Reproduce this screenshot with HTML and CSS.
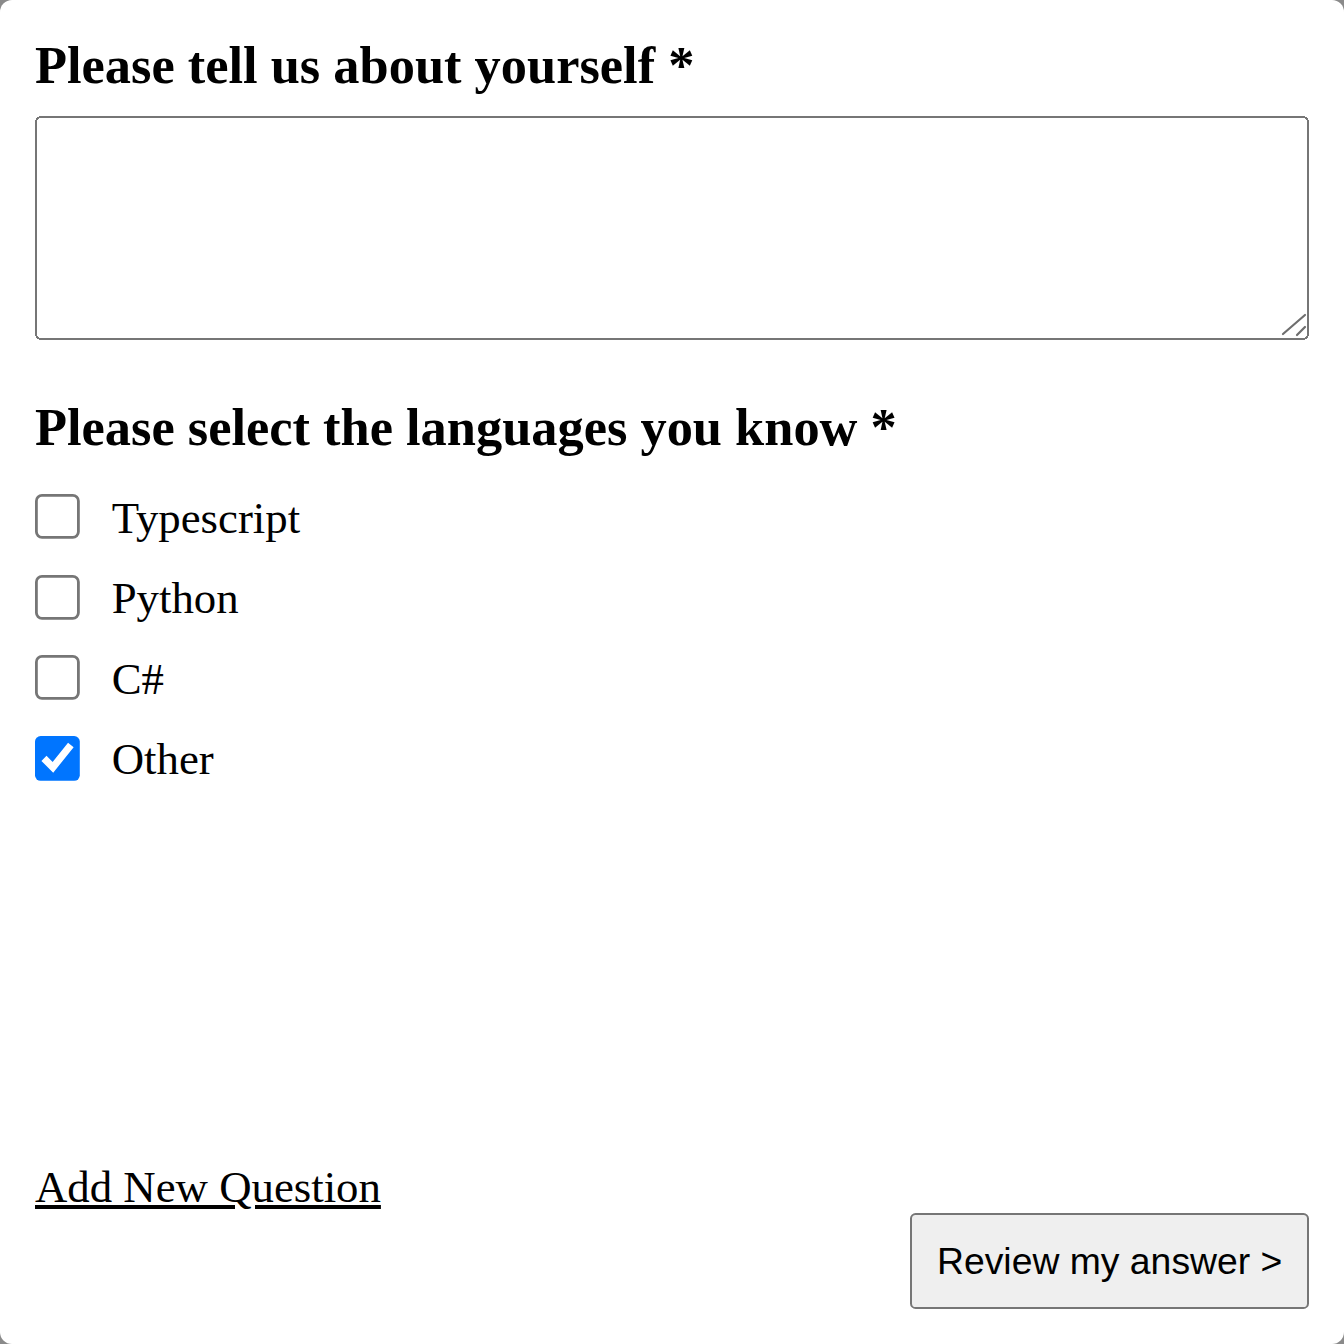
FILE: index.html
```html
<!DOCTYPE html>
<html lang="en">
<head>
<meta charset="utf-8">
<title>Questionnaire</title>
<link rel="stylesheet" href="styles.css">
</head>
<body>
<div class="page">
  <form class="form">
    <h3 class="question">Please tell us about yourself *</h3>
    <div class="answer-wrap">
      <textarea class="answer"></textarea>
      <svg class="grip" viewBox="0 0 30 30" aria-hidden="true">
        <line x1="4" y1="24" x2="26" y2="5"/>
        <line x1="18" y1="25" x2="26" y2="17"/>
      </svg>
    </div>

    <h3 class="question question-gap">Please select the languages you know *</h3>
    <div class="options">
      <label class="option"><input type="checkbox" class="check"><span>Typescript</span></label>
      <label class="option"><input type="checkbox" class="check"><span>Python</span></label>
      <label class="option"><input type="checkbox" class="check"><span>C#</span></label>
      <label class="option"><input type="checkbox" class="check" checked><span>Other</span></label>
    </div>
  </form>
  <div class="footer">
    <a href="#" class="add-link">Add New Question</a>
    <button type="button" class="review">Review my answer &gt;</button>
  </div>
</div>
</body>
</html>
```
FILE: styles.css
```css
html {
  background: #8a8a8a;
}
body {
  margin: 0;
  height: 1344px;
  background: #ffffff;
  border-radius: 12px;
  overflow: hidden;
  font-family: "Liberation Serif", "Times New Roman", serif;
  color: #000;
}
.page {
  zoom: 2.8;
  padding: 12.6px 12.5px 12.5px;
  font-size: 16px;
}
.question {
  margin: 0;
  font-size: 18.72px;
  font-weight: bold;
  line-height: normal;
}
.question-gap {
  margin-top: 20.2px;
}
.answer-wrap {
  position: relative;
  margin-top: 7.4px;
}
.answer {
  display: block;
  box-sizing: border-box;
  width: 100%;
  height: 80px;
  margin: 0;
  resize: none;
  font-family: "Liberation Mono", monospace;
}
.grip {
  position: absolute;
  right: 0;
  bottom: 0;
  width: 10.71px;
  height: 10.71px;
  pointer-events: none;
}
.grip line {
  stroke: #6e6e6e;
  stroke-width: 2.2;
  stroke-linecap: round;
}
.options {
  margin-top: 7.4px;
  display: flex;
  flex-direction: column;
}
.option {
  display: flex;
  align-items: center;
  height: 28.8px;
  gap: 10.6px;
  font-size: 16px;
  line-height: normal;
}
.check {
  margin: 0;
  width: 16.8px;
  height: 16.8px;
  flex: none;
}
.footer {
  margin-top: 129.1px;
  display: flex;
  flex-direction: column;
  align-items: flex-start;
}
.add-link {
  color: #000;
  text-decoration: underline;
  font-size: 16px;
  line-height: normal;
}
.review {
  align-self: flex-end;
  font-family: "Liberation Sans", Arial, sans-serif;
  font-size: 13.333px;
  padding: 8.8px 8.8px;
  background: #efefef;
  border: 1px solid #767676;
  border-radius: 2px;
  color: #000;
}
```
